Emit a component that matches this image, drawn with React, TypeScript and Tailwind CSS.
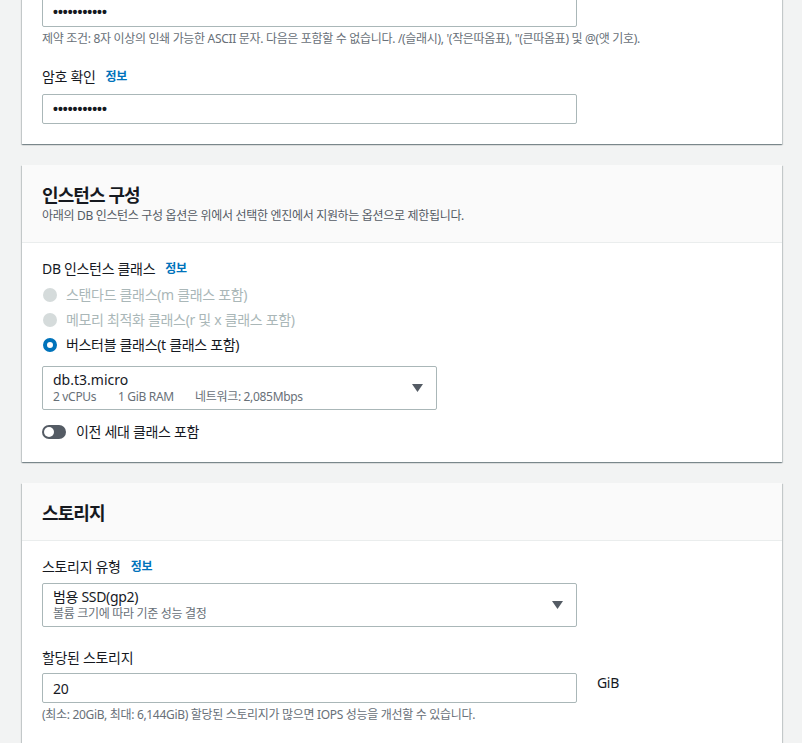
import { useState } from 'react'

const font = { fontFamily: '"Noto Sans", "Noto Sans CJK KR", sans-serif' }

function Info() {
  return <span className="ml-[10px] text-[12px] font-bold text-[#0073bb]">정보</span>
}

function Label({ children, info }: { children: React.ReactNode; info?: boolean }) {
  return (
    <div className="flex items-center h-[20px] text-[14px] leading-[20px] text-[#16191f]">
      <span>{children}</span>
      {info && <Info />}
    </div>
  )
}

function Caret() {
  return (
    <svg width="11" height="8" viewBox="0 0 11 8" className="shrink-0">
      <path d="M0 0 H11 L5.5 8 Z" fill="#545b64" />
    </svg>
  )
}

function Password() {
  return (
    <div className="w-[535px] h-[30px] border border-[#aab7b8] rounded-[2px] flex items-center px-[10px] text-[14px] tracking-normal text-[#16191f] font-['Liberation_Sans',sans-serif] font-bold">
      •••••••••••
    </div>
  )
}

function Card({ children, className = '' }: { children: React.ReactNode; className?: string }) {
  return (
    <section
      className={`bg-white shadow-[0_1px_1px_0_rgba(0,28,36,0.3),1px_1px_1px_0_rgba(0,28,36,0.15),-1px_1px_1px_0_rgba(0,28,36,0.15)] ${className}`}
    >
      {children}
    </section>
  )
}

function CardHeader({ title, desc }: { title: string; desc?: string }) {
  return (
    <div className={`bg-[#fafafa] border-b border-[#eaeded] px-5 pt-[18px] ${desc ? 'pb-[18px]' : 'pb-[15px]'}`}>
      <h2 className="text-[18px] leading-[24px] font-bold text-[#16191f] tracking-[-0.05em]">{title}</h2>
      {desc && <p className="mt-[1px] text-[12px] leading-[16px] text-[#545b64]">{desc}</p>}
    </div>
  )
}

const classes = [
  { id: 'm', label: '스탠다드 클래스(m 클래스 포함)', disabled: true },
  { id: 'r', label: '메모리 최적화 클래스(r 및 x 클래스 포함)', disabled: true },
  { id: 't', label: '버스터블 클래스(t 클래스 포함)', disabled: false },
]

export default function App() {
  const [prevGen, setPrevGen] = useState(false)

  return (
    <div style={font} className="min-h-screen bg-[#f2f3f3] pl-[22px] pr-[20px] pb-10 overflow-hidden tracking-[-0.02em]">
      {/* ── Credentials (cut off at top) ─── */}
      <Card className="-mt-[23px]">
        <div className="px-5 pt-5 pb-5">
          <Password />
          <p className="mt-[4px] text-[12px] leading-[16px] text-[#687078]">
            제약 조건: 8자 이상의 인쇄 가능한 ASCII 문자. 다음은 포함할 수 없습니다. /(슬래시), '(작은따옴표), "(큰따옴표) 및 @(앳 기호).
          </p>
          <div className="mt-5 mb-[7px]">
            <Label info>암호 확인</Label>
          </div>
          <Password />
        </div>
      </Card>

      {/* ── Instance configuration ─── */}
      <Card className="mt-[21px]">
        <CardHeader title="인스턴스 구성" desc="아래의 DB 인스턴스 구성 옵션은 위에서 선택한 엔진에서 지원하는 옵션으로 제한됩니다." />
        <div className="px-5 pt-4 pb-5">
          <Label info>DB 인스턴스 클래스</Label>
          <div className="mt-[3px]">
            {classes.map((c) => (
              <div key={c.id} className="flex items-center h-[25px]">
                {c.disabled ? (
                  <span className="ml-[1px] w-[14px] h-[14px] rounded-full bg-[#d5dbdb]" />
                ) : (
                  <span className="ml-[1px] w-[14px] h-[14px] rounded-full border-[4px] border-[#0073bb] bg-white" />
                )}
                <span className={`ml-[9px] text-[14px] leading-[20px] ${c.disabled ? 'text-[#aab7b8]' : 'text-[#16191f]'}`}>
                  {c.label}
                </span>
              </div>
            ))}
          </div>

          <div className="mt-[9px] w-[395px] h-[44px] border border-[#aab7b8] rounded-[2px] flex items-center justify-between pl-[10px] pr-[13px]">
            <div>
              <div className="text-[14px] leading-[18px] text-[#16191f] tracking-normal">db.t3.micro</div>
              <div className="flex text-[12px] leading-[16px] text-[#687078]">
                <span className="w-[65px]">2 vCPUs</span>
                <span className="w-[77px]">1 GiB RAM</span>
                <span>네트워크: 2,085Mbps</span>
              </div>
            </div>
            <Caret />
          </div>

          <div className="mt-3 flex items-center h-[20px]">
            <button
              onClick={() => setPrevGen(!prevGen)}
              className={`relative w-[24px] h-[14px] rounded-full ${prevGen ? 'bg-[#0073bb]' : 'bg-[#545b64]'}`}
            >
              <span
                className={`absolute top-[2px] w-[10px] h-[10px] rounded-full bg-white ${prevGen ? 'left-[12px]' : 'left-[2px]'}`}
              />
            </button>
            <span className="ml-[10px] text-[14px] leading-[20px] text-[#16191f]">이전 세대 클래스 포함</span>
          </div>
        </div>
      </Card>

      {/* ── Storage ─── */}
      <Card className="mt-[21px]">
        <CardHeader title="스토리지" />
        <div className="px-5 pt-4 pb-8">
          <Label info>스토리지 유형</Label>
          <div className="mt-[6px] w-[535px] h-[44px] border border-[#aab7b8] rounded-[2px] flex items-center justify-between pl-[10px] pr-[13px]">
            <div>
              <div className="text-[14px] leading-[18px] text-[#16191f]">범용 SSD(gp2)</div>
              <div className="text-[12px] leading-[16px] text-[#687078]">볼륨 크기에 따라 기준 성능 결정</div>
            </div>
            <Caret />
          </div>

          <div className="mt-[21px] mb-[5px]">
            <Label>할당된 스토리지</Label>
          </div>
          <div className="flex items-start">
            <div className="w-[535px] h-[30px] border border-[#aab7b8] rounded-[2px] flex items-center px-[10px] text-[14px] text-[#16191f]">
              20
            </div>
            <span className="ml-5 text-[14px] leading-[20px] text-[#16191f]">GiB</span>
          </div>
          <p className="mt-[4px] text-[12px] leading-[16px] text-[#687078]">
            (최소: 20GiB, 최대: 6,144GiB) 할당된 스토리지가 많으면 IOPS 성능을 개선할 수 있습니다.
          </p>
        </div>
      </Card>
    </div>
  )
}
